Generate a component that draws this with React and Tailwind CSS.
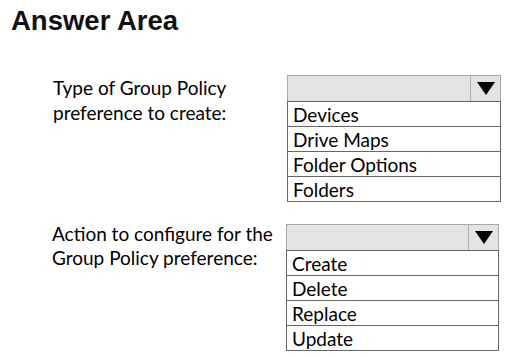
const policyTypes = ['Devices', 'Drive Maps', 'Folder Options', 'Folders'];
const actions = ['Create', 'Delete', 'Replace', 'Update'];

function Dropdown({ items, width }) {
  return (
    <div className={width}>
      <div className="flex h-[27px] border border-[#a8a8a8] bg-[#e3e3e3]">
        <div className="flex-1" />
        <div className="flex w-[30px] items-center justify-center border-l border-[#b0b0b0]">
          <svg width="18" height="13" viewBox="0 0 18 13">
            <polygon points="0,0 18,0 9,13" fill="#000" />
          </svg>
        </div>
      </div>
      <div className="flex flex-col">
        {items.map((item) => (
          <div
            key={item}
            className="-mt-px flex h-[26px] items-center border border-[#666] pl-[5px] text-[19px] leading-none text-black"
          >
            {item}
          </div>
        ))}
      </div>
    </div>
  );
}

export default function App() {
  return (
    <div className="h-[357px] w-[507px] bg-white font-['Lato',sans-serif] text-black">
      <h1 className="pl-[11px] pt-[6px] font-['Liberation_Sans',Arial,sans-serif] text-[27.5px] font-bold leading-[30px] text-[#111]">
        Answer Area
      </h1>

      <div className="mt-[39px] flex">
        <div className="w-[287px] shrink-0 whitespace-nowrap pl-[53px] text-[19px] leading-[25px]">
          <p>Type of Group Policy</p>
          <p>preference to create:</p>
        </div>
        <Dropdown items={policyTypes} width="w-[214px]" />
      </div>

      <div className="mt-[22px] flex">
        <div className="-mt-[2px] w-[286px] shrink-0 whitespace-nowrap pl-[52px] text-[19px] leading-[24px]">
          <p>Action to configure for the</p>
          <p>Group Policy preference:</p>
        </div>
        <Dropdown items={actions} width="w-[213px]" />
      </div>
    </div>
  );
}
